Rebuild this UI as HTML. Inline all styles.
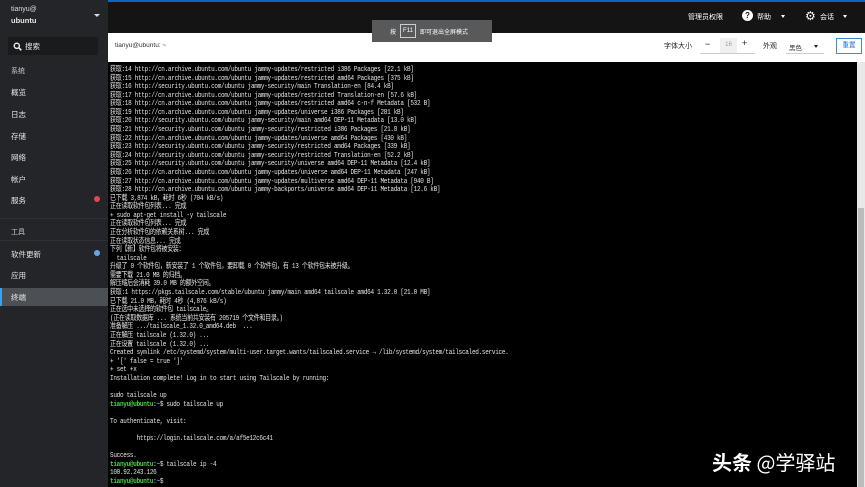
<!DOCTYPE html>
<html><head><meta charset="utf-8"><style>
*{margin:0;padding:0;box-sizing:border-box}
body{width:865px;height:487px;overflow:hidden;background:#000;font-family:"Liberation Sans","Noto Sans CJK SC",sans-serif;position:relative}
#side{position:absolute;left:0;top:0;width:108px;height:487px;background:#232528;color:#e8e8e8}
.si{position:absolute;left:11px;font-size:7.5px;color:#e6e6e6}
.sec{color:#ccc;font-size:7px}
#top{position:absolute;left:108px;top:0;width:757px;height:33px;background:#141414;border-top:2px solid #0a66c2}
#hdr{position:absolute;left:108px;top:33px;width:757px;height:29px;background:#fff}
#term{position:absolute;left:108px;top:62px;width:749px;height:425px;background:#000;overflow:hidden}
#lines{position:absolute;left:2px;top:4px;transform:scaleX(0.8);transform-origin:0 0;font-family:"Liberation Mono","Noto Sans CJK SC",monospace;font-size:7.5px;letter-spacing:-0.35px;line-height:8.58px;color:#e4e4e4;white-space:pre}
.g{color:#4ad04a;font-weight:bold}.b{color:#6f9bff;font-weight:bold}
#sb{position:absolute;left:857px;top:62px;width:8px;height:425px;background:#e8e8e8}
#thumb{position:absolute;left:858px;top:208px;width:6px;height:279px;background:#bcbcbc}
.t{position:absolute;font-size:7px;color:#fff}
</style></head><body>
<div id="side">
<div class="si" style="top:6px;font-size:7px;color:#ddd">tianyu@</div>
<div class="si" style="top:16px;font-weight:bold">ubuntu</div>
<div style="position:absolute;left:94px;top:14px;border:3px solid transparent;border-top:3px solid #ddd"></div>
<div style="position:absolute;left:8px;top:37px;width:90px;height:18px;background:#1a1b1d"></div>
<svg style="position:absolute;left:13px;top:42px" width="9" height="9"><circle cx="3.8" cy="3.8" r="2.6" stroke="#eee" stroke-width="1.4" fill="none"/><line x1="5.6" y1="5.6" x2="8.3" y2="8.3" stroke="#eee" stroke-width="1.6"/></svg>
<div class="si" style="left:25px;top:41px">搜索</div>
<div class="si sec" style="top:66px">系统</div>
<div class="si" style="top:87px">概览</div>
<div class="si" style="top:109px">日志</div>
<div class="si" style="top:131px">存储</div>
<div class="si" style="top:152px">网络</div>
<div class="si" style="top:174px">帐户</div>
<div class="si" style="top:195px">服务</div>
<div style="position:absolute;left:94px;top:196px;width:6px;height:6px;border-radius:50%;background:#e0484b"></div>
<div style="position:absolute;left:0;top:218px;width:108px;height:1px;background:#2e3135"></div>
<div class="si sec" style="top:227px">工具</div>
<div style="position:absolute;left:0;top:240px;width:108px;height:1px;background:#2e3135"></div>
<div class="si" style="top:249px">软件更新</div>
<div style="position:absolute;left:94px;top:250px;width:6px;height:6px;border-radius:50%;background:#63a8e6"></div>
<div class="si" style="top:270px">应用</div>
<div style="position:absolute;left:0;top:288px;width:108px;height:18px;background:#4c4f53;border-left:2px solid #3aa0f0"></div>
<div class="si" style="top:292px">终端</div>
</div>
<div id="top">
<div class="t" style="left:580px;top:10px">管理员权限</div>
<div style="position:absolute;left:634px;top:8px;width:11px;height:11px;background:#fff;border-radius:50%;color:#141414;font-size:8px;text-align:center;line-height:11px;font-weight:bold">?</div>
<div class="t" style="left:649px;top:10px">帮助</div>
<div style="position:absolute;left:673px;top:13px;border:2.5px solid transparent;border-top:3px solid #fff"></div>
<div style="position:absolute;left:697px;top:9px;color:#fff;font-size:12px;line-height:11px">⚙</div>
<div class="t" style="left:712px;top:10px">会话</div>
<div style="position:absolute;left:735px;top:13px;border:2.5px solid transparent;border-top:3px solid #fff"></div>
</div>
<div id="hdr">
<div style="position:absolute;left:7px;top:9px;font-size:6.5px;color:#333">tianyu@ubuntu: ~</div>
<div style="position:absolute;left:556px;top:8px;font-size:7px;color:#222">字体大小</div>
<div style="position:absolute;left:592px;top:5px;width:55px;height:16px;border-bottom:1px solid #ccc"></div>
<div style="position:absolute;left:597px;top:6px;font-size:9px;color:#222">−</div>
<div style="position:absolute;left:612px;top:5px;width:17px;height:15px;background:#f0f0f0;font-size:6px;color:#999;text-align:center;line-height:15px">16</div>
<div style="position:absolute;left:634px;top:5px;font-size:9px;color:#222">+</div>
<div style="position:absolute;left:655px;top:8px;font-size:7px;color:#222">外观</div>
<div style="position:absolute;left:678px;top:5px;width:38px;height:16px;border-bottom:1px solid #ccc;font-size:6.5px;color:#333;padding:4px 0 0 3px">黑色</div>
<div style="position:absolute;left:706px;top:12px;border:2.5px solid transparent;border-top:3px solid #222"></div>
<div style="position:absolute;left:728px;top:5px;width:26px;height:16px;border:1px solid #3c8ad8;font-size:6.5px;color:#1a6ccb;text-align:center;line-height:14px">重置</div>
</div>
<div style="position:absolute;left:372px;top:20px;width:120px;height:22px;background:#58595b"></div>
<div style="position:absolute;left:390px;top:27px;font-size:6px;color:#fff">按</div>
<div style="position:absolute;left:400px;top:24px;width:16px;height:14px;border:1px solid #ccc;font-size:6px;color:#fff;text-align:center;line-height:12px">F11</div>
<div style="position:absolute;left:420px;top:27px;font-size:6px;color:#fff">即可退出全屏模式</div>
<div id="term"><div id="lines">获取:14 http://cn.archive.ubuntu.com/ubuntu jammy-updates/restricted i386 Packages [22.1 kB]
获取:15 http://cn.archive.ubuntu.com/ubuntu jammy-updates/restricted amd64 Packages [375 kB]
获取:16 http://security.ubuntu.com/ubuntu jammy-security/main Translation-en [84.4 kB]
获取:17 http://cn.archive.ubuntu.com/ubuntu jammy-updates/restricted Translation-en [57.6 kB]
获取:18 http://cn.archive.ubuntu.com/ubuntu jammy-updates/restricted amd64 c-n-f Metadata [532 B]
获取:19 http://cn.archive.ubuntu.com/ubuntu jammy-updates/universe i386 Packages [281 kB]
获取:20 http://security.ubuntu.com/ubuntu jammy-security/main amd64 DEP-11 Metadata [13.0 kB]
获取:21 http://security.ubuntu.com/ubuntu jammy-security/restricted i386 Packages [21.8 kB]
获取:22 http://cn.archive.ubuntu.com/ubuntu jammy-updates/universe amd64 Packages [430 kB]
获取:23 http://security.ubuntu.com/ubuntu jammy-security/restricted amd64 Packages [339 kB]
获取:24 http://security.ubuntu.com/ubuntu jammy-security/restricted Translation-en [52.2 kB]
获取:25 http://security.ubuntu.com/ubuntu jammy-security/universe amd64 DEP-11 Metadata [12.4 kB]
获取:26 http://cn.archive.ubuntu.com/ubuntu jammy-updates/universe amd64 DEP-11 Metadata [247 kB]
获取:27 http://cn.archive.ubuntu.com/ubuntu jammy-updates/multiverse amd64 DEP-11 Metadata [940 B]
获取:28 http://cn.archive.ubuntu.com/ubuntu jammy-backports/universe amd64 DEP-11 Metadata [12.6 kB]
已下载 3,874 kB，耗时 6秒 (704 kB/s)
正在读取软件包列表... 完成
+ sudo apt-get install -y tailscale
正在读取软件包列表... 完成
正在分析软件包的依赖关系树... 完成
正在读取状态信息... 完成
下列【新】软件包将被安装：
  tailscale
升级了 0 个软件包，新安装了 1 个软件包，要卸载 0 个软件包，有 13 个软件包未被升级。
需要下载 21.0 MB 的归档。
解压缩后会消耗 39.0 MB 的额外空间。
获取:1 https://pkgs.tailscale.com/stable/ubuntu jammy/main amd64 tailscale amd64 1.32.0 [21.0 MB]
已下载 21.0 MB，耗时 4秒 (4,876 kB/s)
正在选中未选择的软件包 tailscale。
(正在读取数据库 ... 系统当前共安装有 205719 个文件和目录。)
准备解压 .../tailscale_1.32.0_amd64.deb  ...
正在解压 tailscale (1.32.0) ...
正在设置 tailscale (1.32.0) ...
Created symlink /etc/systemd/system/multi-user.target.wants/tailscaled.service → /lib/systemd/system/tailscaled.service.
+ '[' false = true ']'
+ set +x
Installation complete! Log in to start using Tailscale by running:

sudo tailscale up
<span class="g">tianyu@ubuntu</span>:<span class="b">~</span>$ sudo tailscale up

To authenticate, visit:

        https://login.tailscale.com/a/af5e12c6c41

Success.
<span class="g">tianyu@ubuntu</span>:<span class="b">~</span>$ tailscale ip -4
100.92.243.126
<span class="g">tianyu@ubuntu</span>:<span class="b">~</span>$ </div></div>
<div id="sb"></div><div id="thumb"></div>
<div style="position:absolute;left:712px;top:447px;font-size:20px;color:#fff;font-family:'Noto Sans CJK SC',sans-serif;white-space:nowrap"><b>头条</b> @学驿站</div>
</body></html>
